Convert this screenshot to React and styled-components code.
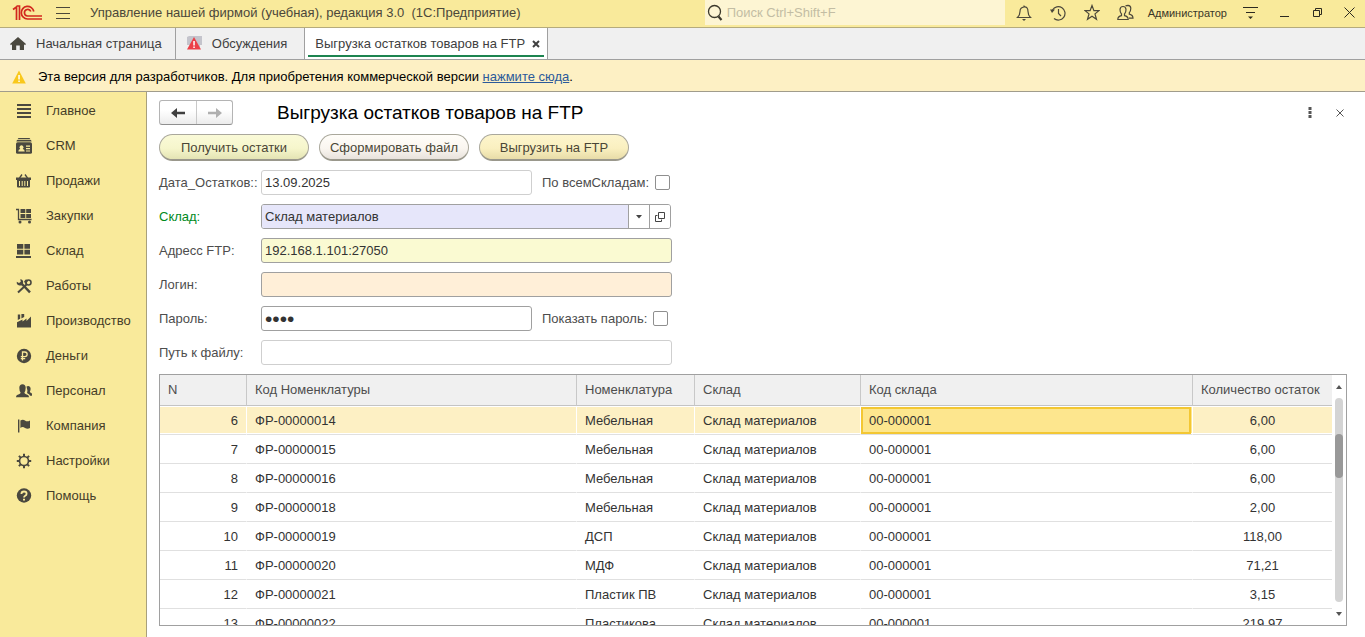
import React, { useState } from "react";
import styled, { createGlobalStyle, css } from "styled-components";

const GlobalStyle = createGlobalStyle`
  *, *::before, *::after { box-sizing: border-box; }
  html, body, #root { height: 100%; }
  body {
    margin: 0;
    background: #fff;
    color: #333;
    font: 13px/16px "Liberation Sans", Arial, sans-serif;
    overflow: hidden;
  }
  button, input { font: inherit; color: inherit; }
`;

const ink = "#4b473a";

const Window = styled.div`
  display: flex;
  flex-direction: column;
  height: 100%;
`;

const TitleBar = styled.header`
  display: flex;
  align-items: center;
  flex: none;
  height: 28px;
  padding-bottom: 2px;
  background: #f9ea9b;
  border-bottom: 1px solid #b5ab7c;
  color: ${ink};
`;

const PlainButton = styled.button`
  display: flex;
  align-items: center;
  justify-content: center;
  flex: none;
  width: ${(p) => p.$width || 34}px;
  height: ${(p) => p.$height || 24}px;
  padding: 0;
  border: 0;
  background: none;
`;

const WindowButton = styled(PlainButton)`
  width: ${(p) => p.$width || 33}px;
  color: #2c2a20;
`;

const AppLogo = styled.div`
  display: flex;
  padding: 0 12px;
`;

const AppTitle = styled.div`
  flex: 1;
  padding-left: 19px;
  white-space: pre;
`;

const SearchBox = styled.label`
  display: flex;
  align-items: center;
  align-self: flex-start;
  width: 300px;
  height: 25px;
  margin-right: 2px;
  padding-left: 2px;
  gap: 4px;
  background: #fdf5d3;
`;

const SearchInput = styled.input`
  flex: 1;
  min-width: 0;
  padding: 0;
  border: 0;
  outline: 0;
  background: none;
  &::placeholder { color: #c3bda4; opacity: 1; }
`;

const UserName = styled.button`
  padding: 0 5px;
  border: 0;
  background: none;
  color: #3a3728;
  font-size: 11px;
`;

const TabBar = styled.nav`
  display: flex;
  flex: none;
  height: 32px;
  background: #f0f0f0;
  border-bottom: 1px solid #a0a0a0;
`;

const Tab = styled.div`
  display: flex;
  align-items: center;
  gap: ${(p) => p.$gap || 10}px;
  padding: 0 ${(p) => p.$end || 13}px 0 10px;
  border-right: 1px solid #a0a0a0;
  color: #404040;
  ${(p) =>
    p.$active &&
    css`
      position: relative;
      background: #fff;
      &::after {
        content: "";
        position: absolute;
        left: 3px;
        right: 3px;
        bottom: 2px;
        height: 2px;
        background: #1d8450;
      }
    `}
`;

const TabLabel = styled.button`
  padding: 0;
  border: 0;
  background: none;
  white-space: nowrap;
`;

const Notice = styled.div`
  display: flex;
  align-items: center;
  flex: none;
  height: 32px;
  padding: 2px 12px 0;
  gap: 12px;
  background: #fdf0c4;
  border-bottom: 1px solid #a09c8c;
  color: #000;
`;

const NoticeLink = styled.a`
  color: #2c5a9a;
`;

const Workspace = styled.div`
  display: flex;
  flex: 1;
  min-height: 0;
`;

const Sidebar = styled.nav`
  flex: none;
  width: 147px;
  padding-top: 1px;
  background: #f9ea9b;
  border-right: 1px solid #a8a07c;
`;

const SidebarItem = styled.a`
  display: flex;
  align-items: center;
  gap: 14px;
  height: 35px;
  padding-left: 16px;
  color: #453d28;
  text-decoration: none;
`;

const Form = styled.main`
  display: flex;
  flex-direction: column;
  flex: 1;
  min-width: 0;
  padding: 7px 18px 11px 12px;
`;

const FormHeader = styled.div`
  display: flex;
  align-items: center;
  height: 27px;
  margin-right: -8px;
`;

const NavButtons = styled.div`
  display: flex;
  width: 74px;
  height: 25px;
  border: 1px solid #b4b4b4;
  border-bottom-color: #8f8f8f;
  border-radius: 3px;
  background: linear-gradient(#fff 40%, #ececec);
`;

const NavButton = styled(PlainButton)`
  width: 36px;
  height: 23px;
  & + & { border-left: 1px solid #c9c9c9; }
`;

const FormTitle = styled.h1`
  flex: 1;
  margin: 0;
  padding-left: 44px;
  color: #000;
  font-size: 19px;
  line-height: 24px;
  font-weight: 400;
`;

const Commands = styled.div`
  display: flex;
  gap: 10px;
  margin: 8px 0 9px;
`;

const tones = {
  green: "linear-gradient(#fafad8, #f6f6cc 55%, #e4e4b4)",
  white: "linear-gradient(#fffdf9, #faf6f0 55%, #e8e2dc)",
  yellow: "linear-gradient(#fdf5cd, #faf0c0 55%, #e8dca8)",
};

const CommandButton = styled.button`
  width: 150px;
  height: 27px;
  padding: 2px 0 0;
  border: 1px solid #aaa89c;
  border-bottom: 2px solid #9a988c;
  border-radius: 14px;
  background: ${(p) => tones[p.$tone]};
  color: #4a4636;
`;

const Fields = styled.div`
  display: grid;
  gap: 9px;
  justify-items: start;
`;

const FieldRow = styled.div`
  display: flex;
  align-items: center;
  height: 25px;
`;

const FieldLabel = styled.label`
  width: 102px;
  color: ${(p) => (p.$linked ? "#008a1c" : "#4d4d4d")};
  white-space: nowrap;
`;

const TextField = styled.input`
  width: ${(p) => (p.$short ? 271 : 411)}px;
  height: 25px;
  padding: 0 3px;
  border: 1px solid ${(p) => (p.$faint ? "#cfcfcf" : "#a0a0a0")};
  border-radius: 3px;
  outline: 0;
  background: ${(p) => p.$fill || "#fff"};
  &[type="password"] { font-size: 21px; }
`;

const PickerGroup = styled.div`
  display: flex;
  width: 410px;
  height: 25px;
  border: 1px solid #a0a0a0;
  border-radius: 3px;
  overflow: hidden;
`;

const PickerInput = styled.input`
  flex: 1;
  min-width: 0;
  padding: 0 3px;
  border: 0;
  outline: 0;
  background: #e6e6fa;
`;

const PickerButton = styled(PlainButton)`
  width: 21px;
  height: 23px;
  border-left: 1px solid #a0a0a0;
  background: #fff;
`;

const CheckLabel = styled.label`
  display: flex;
  align-items: center;
  gap: 6px;
  margin-left: 10px;
  color: #4d4d4d;
`;

const CheckBox = styled.input`
  appearance: none;
  width: 15px;
  height: 15px;
  margin: 0;
  border: 1px solid #8f8f8f;
  border-radius: 2px;
  background: #fff;
  &:checked { background: #6b6b6b; box-shadow: inset 0 0 0 2px #fff; }
`;

const GridFrame = styled.div`
  display: flex;
  flex: 1;
  min-height: 0;
  margin-top: 9px;
  border: 1px solid #a0a0a0;
`;

const GridClip = styled.div`
  flex: 1;
  min-width: 0;
  overflow: hidden;
`;

const Grid = styled.table`
  width: 100%;
  table-layout: fixed;
  border-collapse: separate;
  border-spacing: 0;
`;

const Col = styled.col`
  width: ${(p) => p.$width};
`;

const HeadCell = styled.th`
  height: 31px;
  padding: 0 8px;
  border-bottom: 1px solid #c4c4c4;
  background: #f0f0f0;
  color: #4d4d4d;
  font-weight: 400;
  text-align: left;
  white-space: nowrap;
  & + & { border-left: 1px solid #c8c8c8; }
`;

const Cell = styled.td`
  height: 29px;
  padding: 1px 8px 0;
  border-bottom: 1px solid #e0e0e0;
  text-align: ${(p) => p.$align || "left"};
  white-space: nowrap;
  overflow: hidden;
  & + & { border-left: 1px solid transparent; }
`;

const GridRow = styled.tr`
  ${(p) =>
    p.$current &&
    css`
      ${Cell} {
        background: #fdf0c4;
        background-clip: padding-box;
        box-shadow: inset 0 1px #fff, inset 0 -1px #fff;
      }
      ${Cell}:nth-child(5) {
        background: #fde68e;
        background-clip: padding-box;
        outline: 2px solid #f3c733;
        outline-offset: -3px;
      }
    `}
`;

const ScrollBar = styled.div`
  display: flex;
  flex-direction: column;
  align-items: center;
  flex: none;
  width: 14px;
`;

const ScrollTrack = styled.div`
  flex: 1;
  width: 8px;
  padding-top: 36px;
  border-radius: 4px;
  background: #d4d4d4;
`;

const ScrollThumb = styled.div`
  height: 44px;
  border-radius: 4px;
  background: #999;
`;

const Svg = ({ w = 16, h = w, children, ...rest }) => (
  <svg width={w} height={h} viewBox={`0 0 ${w} ${h}`} fill="none" stroke="currentColor" aria-hidden="true" {...rest}>
    {children}
  </svg>
);

const Solid = (props) => <Svg fill="#4a483f" stroke="none" {...props} />;

const Logo = () => (
  <Svg w={31} h={17} stroke="#d2281e" strokeWidth="1.700">
    <path d="M1 5.500 4.500 3V16M4.500 2H7.500V16" />
    <path d="M21.800 7.500A6.300 6.300 0 1 0 15.500 15H30" />
    <path d="M18.800 7.500A3.300 3.300 0 1 0 15.500 12H30" />
  </Svg>
);

const sections = [
  ["Главное", <Solid><path d="M1 1h14v2H1zM1 5h14v2H1zM1 9h14v2H1zM1 13h14v2H1z" /></Solid>],
  ["CRM", <Solid>
    <path d="M2.5 0h11l1 1.3h-13zM1 2h14l.6 1.4H.4z" />
    <rect y="4.2" width="16" height="11.6" rx="1.6" />
    <path d="M2.3 13.4q0-2 2-2.4a2 2 0 1 1 2.4 0q2 .4 2 2.4zM10 7.5h4v1.2h-4zM10 10h4v1.2h-4zM10 12.4h4v1.2h-4z" fill="#f9ea9b" />
  </Solid>],
  ["Продажи", <Solid>
    <path d="M3.500 5 6 1.500M11.500 5 9 1.500" stroke="#4a483f" strokeWidth="1.3" />
    <path d="M0 4.500h15v2.500H0zM1 7h13v6.500q0 1-1 1H2q-1 0-1-1z" />
    <path d="M3.500 8v5M6.200 8v5M8.800 8v5M11.500 8v5" stroke="#f9ea9b" strokeWidth="1" />
  </Solid>],
  ["Закупки", <Solid>
    <path d="M0 1.500H2.500V11.500H15.500" fill="none" stroke="#4a483f" strokeWidth="1.300" />
    <path d="M4.500 1h4.800v4H4.500zM10.200 1H15v4h-4.800zM4.500 6h4.800v4H4.500zM10.200 6H15v4h-4.800z" />
    <circle cx="4" cy="14" r="1.500" /><circle cx="13.500" cy="14" r="1.500" />
  </Solid>],
  ["Склад", <Solid><path d="M1 1h6.300v4.700H1zM8.400 1H14v4.700H8.400zM1 6.800h6.300v4.700H1zM8.400 6.800H14v4.700H8.400zM0 13h15v2H0z" /></Solid>],
  ["Работы", <Solid>
    <path d="M5.500 5.500 14 14.300" stroke="#4a483f" strokeWidth="2.400" />
    <path d="M10.500 6.500 2 14.500" stroke="#4a483f" strokeWidth="2" />
    <path d="M4.200 1.200A3.200 3.200 0 1 1 .8 3.800L3 5l1.800-1.300z" />
    <circle cx="12.500" cy="4.500" r="2.500" fill="none" stroke="#4a483f" strokeWidth="1.600" />
    <path d="M8 3.500 10 1.200 12 3 9.500 6z" />
  </Solid>],
  ["Производство", <Solid>
    <path d="M1 14.500V9.200L6.500 6.500V8.500L10.500 5.600V8L15 3.500V14.500z" />
    <path d="M1.800 1.500h2.400V5.800L1.800 7zM5.400 1h2.800v3L5.400 5.400z" />
  </Solid>],
  ["Деньги", <Solid>
    <circle cx="8" cy="8" r="7.200" />
    <path d="M6.500 12.500V4h2.300a2.300 2.300 0 0 1 0 4.700H4.800M4.800 10.600h4.400" fill="none" stroke="#f9ea9b" strokeWidth="1.300" />
  </Solid>],
  ["Персонал", <Solid>
    <path d="M0 14.300q0-2.600 3-3.100 1.600-.4 1.600-1.600Q3.300 8 3.300 4.800 3.400 1.300 6.500 1.200 9.600 1.300 9.700 4.800 9.600 8 8.400 9.600q0 1.200 1.600 1.600 3 .5 3 3.100z" />
    <path d="M10.500 3.500q2-1.200 3.600.4 1 1.700.1 4-.8 1 .2 1.700 2 .5 2.100 3.200h-2.400q-.8-1.700-2.500-2.300-.9-1-.1-2.500z" />
  </Solid>],
  ["Компания", <Solid><path d="M2 1.500h1.400V14.500H2zM4.400 2.500Q7 .800 9 2.500T14 2.500V10Q11.500 11.500 9 9.900T4.400 10z" /></Solid>],
  ["Настройки", <Solid>
    <circle cx="8" cy="8" r="4.500" fill="none" stroke="#4a483f" strokeWidth="1.700" />
    <path d="M8 .8v3M8 12.200v3M.8 8h3M12.200 8h3M2.900 2.900l2 2M11.100 11.100l2 2M2.900 13.100l2-2M11.100 4.900l2-2" stroke="#4a483f" strokeWidth="2" />
  </Solid>],
  ["Помощь", <Solid>
    <circle cx="8" cy="7.500" r="7.200" />
    <path d="M5.400 6Q5.400 3.500 8 3.500T10.600 5.700Q10.600 7 9.200 7.800 8 8.500 8 9.600" fill="none" stroke="#f9ea9b" strokeWidth="1.800" />
    <path d="M7 10.700h2v1.900H7z" fill="#f9ea9b" />
  </Solid>],
];

const stock = [
  [6, "ФР-00000014", "Мебельная", "6,00"],
  [7, "ФР-00000015", "Мебельная", "6,00"],
  [8, "ФР-00000016", "Мебельная", "6,00"],
  [9, "ФР-00000018", "Мебельная", "2,00"],
  [10, "ФР-00000019", "ДСП", "118,00"],
  [11, "ФР-00000020", "МДФ", "71,21"],
  [12, "ФР-00000021", "Пластик ПВ", "3,15"],
  [13, "ФР-00000022", "Пластикова", "219,97"],
];

const columns = [
  ["N", "86px"],
  ["Код Номенклатуры", "auto"],
  ["Номенклатура", "118px"],
  ["Склад", "166px"],
  ["Код склада", "332px"],
  ["Количество остаток", "140px"],
];

export default function App() {
  const [current, setCurrent] = useState(6);
  const [showPassword, setShowPassword] = useState(false);

  return (
    <>
      <GlobalStyle />
      <Window>
        <TitleBar>
          <AppLogo><Logo /></AppLogo>
          <PlainButton $width={16} aria-label="Меню">
            <Svg w={14} h={12}><path d="M0 .5h14M0 6.500h14M0 11.500h14" /></Svg>
          </PlainButton>
          <AppTitle>{"Управление нашей фирмой (учебная), редакция 3.0  (1С:Предприятие)"}</AppTitle>
          <SearchBox>
            <Svg w={16} h={18} stroke="#3c392c">
              <circle cx="7.500" cy="7.500" r="6" strokeWidth="1.300" />
              <path d="M11.500 12.500 14.500 16" strokeWidth="2.200" />
            </Svg>
            <SearchInput aria-label="Поиск" placeholder="Поиск Ctrl+Shift+F" />
          </SearchBox>
          <PlainButton aria-label="Уведомления">
            <Svg w={16} h={18} strokeWidth="1.200">
              <path d="M8 1.500V3M1.500 13.500Q4 11 4 7.500 4 3.500 8 3T12 7.500Q12 11 14.500 13.500z" />
              <path d="M6 15h4L8 17z" fill="currentColor" stroke="none" />
            </Svg>
          </PlainButton>
          <PlainButton aria-label="История">
            <Svg w={16} h={16} strokeWidth="1.200">
              <path d="M2.500 5A6.700 6.700 0 1 1 4 13.500M8.500 4v4.500L11 11" />
              <path d="M0 4.500h5L2 8z" fill="currentColor" stroke="none" />
            </Svg>
          </PlainButton>
          <PlainButton aria-label="Избранное">
            <Svg w={16} h={17} strokeWidth="1.200">
              <path d="M8 1.500 9.900 6.600H15L11 9.900 12.500 15.300 8 12.200 3.500 15.300 5 9.900 1 6.600H6.100z" />
            </Svg>
          </PlainButton>
          <PlainButton aria-label="Пользователь">
            <Svg w={17} h={17} strokeWidth="1.200">
              <path d="M.8 15.500q0-3 3.700-3.800V10Q3 8.500 3 5.500 3.200 2.500 6 2.500T9 5.500Q9 8.500 7.500 10v1.700q3.700.8 3.700 3.800z" />
              <path d="M8.500 2.200Q9.400 1.300 11 1.300 13.700 1.500 13.800 4.300 13.800 7.200 12.300 8.700v1.500Q16 11 16 14.200H12" />
            </Svg>
          </PlainButton>
          <UserName>Администратор</UserName>
          <WindowButton $width={36} aria-label="Параметры">
            <Svg w={15} h={14} strokeWidth="1.200">
              <path d="M0 1.500h15M3 6.500h9" />
              <path d="M5 10.500h5L7.500 13z" fill="currentColor" stroke="none" />
            </Svg>
          </WindowButton>
          <WindowButton aria-label="Свернуть"><Svg w={9} h={9}><path d="M0 8.500h9" /></Svg></WindowButton>
          <WindowButton aria-label="Восстановить">
            <Svg w={9} h={9}><path d="M.5 2.500h6v6h-6zM2.500 2V.5h6v6H7" /></Svg>
          </WindowButton>
          <WindowButton $width={31} aria-label="Закрыть"><Svg w={11}><path d="m.5.5 10 10M10.500.5l-10 10" /></Svg></WindowButton>
        </TitleBar>

        <TabBar>
          <Tab>
            <Solid>
              <path d="M8 1 16 8l-1 1.200-1-.9V14H9.800V9.500H6.200V14H2V8.300l-1 .9L0 8z" />
            </Solid>
            <TabLabel>Начальная страница</TabLabel>
          </Tab>
          <Tab $end={17}>
            <Svg stroke="none">
              <path d="M3 0h13v9h-2v2H4V9H1V1z" fill="#c4c4cc" />
              <path d="M8 1 15 13.500H1z" fill="#ec4048" />
              <path d="M7.300 5h1.500v4.500H7.300zM7.300 10.500h1.500V12H7.300z" fill="#fff" />
            </Svg>
            <TabLabel>Обсуждения</TabLabel>
          </Tab>
          <Tab $active $gap={2} $end={2}>
            <TabLabel>Выгрузка остатков товаров на FTP</TabLabel>
            <PlainButton $width={18} aria-label="Закрыть вкладку">
              <Svg w={8} strokeWidth="2"><path d="m1 1 6 6M7 1 1 7" /></Svg>
            </PlainButton>
          </Tab>
        </TabBar>

        <Notice>
          <Svg w={14} stroke="none">
            <path d="M7 .5 13.800 13.500H.2z" fill="#f9c81c" />
            <path d="M6.300 5h1.500v4.500H6.300zM6.300 10.500h1.500V12H6.300z" fill="#fff" />
          </Svg>
          <span>
            Эта версия для разработчиков. Для приобретения коммерческой версии <NoticeLink href="#buy">нажмите сюда</NoticeLink>.
          </span>
        </Notice>

        <Workspace>
          <Sidebar>
            {sections.map(([name, icon]) => (
              <SidebarItem href="#section" key={name}>{icon}{name}</SidebarItem>
            ))}
          </Sidebar>

          <Form>
            <FormHeader>
              <NavButtons>
                <NavButton aria-label="Назад">
                  <Svg w={14} h={12} stroke="none" fill="#404040"><path d="M6 1v3.800h8v2.400H6V11L0 6z" /></Svg>
                </NavButton>
                <NavButton aria-label="Вперёд">
                  <Svg w={14} h={12} stroke="none" fill="#b0b0b0"><path d="M8 1v3.800H0v2.400h8V11l6-5z" /></Svg>
                </NavButton>
              </NavButtons>
              <FormTitle>Выгрузка остатков товаров на FTP</FormTitle>
              <PlainButton $width={30} aria-label="Ещё">
                <Svg w={4} h={12} stroke="none" fill="#555"><path d="M.5 0h3v3h-3zM.5 4h3v3h-3zM.5 8h3v3h-3z" /></Svg>
              </PlainButton>
              <PlainButton $width={30} aria-label="Закрыть форму">
                <Svg w={8} stroke="#555"><path d="m.5.5 7 7M7.500.5l-7 7" /></Svg>
              </PlainButton>
            </FormHeader>

            <Commands>
              <CommandButton $tone="green">Получить остатки</CommandButton>
              <CommandButton $tone="white">Сформировать файл</CommandButton>
              <CommandButton $tone="yellow">Выгрузить на FTP</CommandButton>
            </Commands>

            <Fields>
              <FieldRow>
                <FieldLabel htmlFor="date">Дата_Остатков::</FieldLabel>
                <TextField id="date" $short $faint defaultValue="13.09.2025" />
                <CheckLabel>По всемСкладам:<CheckBox type="checkbox" /></CheckLabel>
              </FieldRow>
              <FieldRow>
                <FieldLabel htmlFor="store" $linked>Склад:</FieldLabel>
                <PickerGroup>
                  <PickerInput id="store" defaultValue="Склад материалов" />
                  <PickerButton aria-label="Выбрать">
                    <Svg w={6} h={4} stroke="none" fill="#444"><path d="M0 0h6L3 3.500z" /></Svg>
                  </PickerButton>
                  <PickerButton aria-label="Открыть">
                    <Svg w={10} stroke="#444"><path d="M3.500.5h6v6h-6zM2.500 3.500h-2v6h6v-2" /></Svg>
                  </PickerButton>
                </PickerGroup>
              </FieldRow>
              <FieldRow>
                <FieldLabel htmlFor="ftp">Адресс FTP:</FieldLabel>
                <TextField id="ftp" $fill="#fafad2" defaultValue="192.168.1.101:27050" />
              </FieldRow>
              <FieldRow>
                <FieldLabel htmlFor="login">Логин:</FieldLabel>
                <TextField id="login" $fill="#ffefd8" />
              </FieldRow>
              <FieldRow>
                <FieldLabel htmlFor="password">Пароль:</FieldLabel>
                <TextField id="password" type={showPassword ? "text" : "password"} $short defaultValue="1234" />
                <CheckLabel>
                  Показать пароль:
                  <CheckBox type="checkbox" checked={showPassword} onChange={(e) => setShowPassword(e.target.checked)} />
                </CheckLabel>
              </FieldRow>
              <FieldRow>
                <FieldLabel htmlFor="path">Путь к файлу:</FieldLabel>
                <TextField id="path" $faint />
              </FieldRow>
            </Fields>

            <GridFrame>
              <GridClip>
                <Grid>
                  <colgroup>{columns.map(([name, width]) => <Col key={name} $width={width} />)}</colgroup>
                  <thead>
                    <tr>{columns.map(([name]) => <HeadCell key={name}>{name}</HeadCell>)}</tr>
                  </thead>
                  <tbody>
                    {stock.map(([n, code, item, amount]) => (
                      <GridRow key={n} $current={n === current} onClick={() => setCurrent(n)}>
                        <Cell $align="right">{n}</Cell>
                        <Cell>{code}</Cell>
                        <Cell>{item}</Cell>
                        <Cell>Склад материалов</Cell>
                        <Cell>00-000001</Cell>
                        <Cell $align="center">{amount}</Cell>
                      </GridRow>
                    ))}
                  </tbody>
                </Grid>
              </GridClip>
              <ScrollBar>
                <PlainButton $width={14} $height={23} aria-label="Вверх">
                  <Svg w={6} h={4} stroke="none" fill="#555"><path d="M0 4h6L3 0z" /></Svg>
                </PlainButton>
                <ScrollTrack><ScrollThumb /></ScrollTrack>
                <PlainButton $width={14} $height={23} aria-label="Вниз">
                  <Svg w={6} h={4} stroke="none" fill="#555"><path d="M0 0h6L3 4z" /></Svg>
                </PlainButton>
              </ScrollBar>
            </GridFrame>
          </Form>
        </Workspace>
      </Window>
    </>
  );
}
